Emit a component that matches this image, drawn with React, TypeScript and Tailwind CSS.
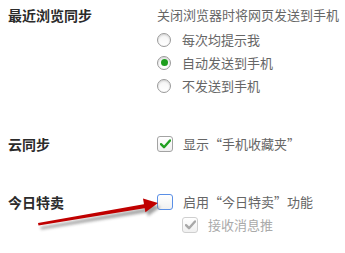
import React from "react";

const font = { fontFamily: '"Noto Sans CJK SC", "Noto Sans", sans-serif' };

function Radio({ checked }: { checked?: boolean }) {
  return (
    <span className="flex h-[14px] w-[14px] items-center justify-center rounded-full border border-[#9a9a9a] bg-gradient-to-b from-[#f4f4f4] to-white shadow-[inset_0_1px_2px_rgba(0,0,0,0.15)]">
      {checked && <span className="h-[7px] w-[7px] rounded-full bg-[#1e9e1e]" />}
    </span>
  );
}

function Check({ color }: { color: string }) {
  return (
    <svg width="11" height="10" viewBox="0 0 11 10">
      <path d="M1 5.2 L4 8.2 L10 1.5" fill="none" stroke={color} strokeWidth="2.4" strokeLinecap="round" strokeLinejoin="round" />
    </svg>
  );
}

function Box({ checked, blue, disabled }: { checked?: boolean; blue?: boolean; disabled?: boolean }) {
  return (
    <span
      className={
        "flex h-[16px] w-[16px] items-center justify-center rounded-[3px] border bg-gradient-to-b from-white to-[#f0f0f0] " +
        (blue ? "border-[#5a8fe6]" : disabled ? "border-[#cfcfcf]" : "border-[#a3a3a3]")
      }
    >
      {checked && <Check color={disabled ? "#a8a8a8" : "#21a021"} />}
    </span>
  );
}

export default function App() {
  return (
    <div className="relative h-[253px] w-[345px] overflow-hidden bg-white pt-[4px]" style={font}>
      {/* Row 1 */}
      <div className="flex">
        <div className="w-[157px] shrink-0 pl-2 text-[14px] font-bold leading-[22px] text-[#2b2b2b]">最近浏览同步</div>
        <div className="flex flex-col text-[13px] text-[#666]">
          <div className="leading-[22px] whitespace-nowrap">关闭浏览器时将网页发送到手机</div>
          <div className="mt-[2px] flex h-[23px] items-center gap-[11px]">
            <Radio />
            <span>每次均提示我</span>
          </div>
          <div className="flex h-[23px] items-center gap-[11px]">
            <Radio checked />
            <span>自动发送到手机</span>
          </div>
          <div className="flex h-[23px] items-center gap-[11px]">
            <Radio />
            <span>不发送到手机</span>
          </div>
        </div>
      </div>

      {/* Row 2 */}
      <div className="mt-[36px] flex">
        <div className="w-[157px] shrink-0 pl-2 text-[14px] font-bold leading-[22px] text-[#2b2b2b]">云同步</div>
        <div className="flex h-[22px] items-center gap-[10px] text-[13px] text-[#666]">
          <Box checked />
          <span>显示“手机收藏夹”</span>
        </div>
      </div>

      {/* Row 3 */}
      <div className="mt-[36px] flex">
        <div className="w-[157px] shrink-0 pl-2 text-[14px] font-bold leading-[22px] text-[#2b2b2b]">今日特卖</div>
        <div className="flex flex-col text-[13px]">
          <div className="flex h-[22px] items-center gap-[10px] text-[#666]">
            <Box blue />
            <span>启用“今日特卖”功能</span>
          </div>
          <div className="ml-[25px] flex h-[23px] items-center gap-[10px] text-[#aaa]">
            <Box checked disabled />
            <span className="whitespace-nowrap">接收消息推</span>
          </div>
        </div>
      </div>

      {/* Annotation arrow */}
      <svg className="pointer-events-none absolute left-0 top-0" width="345" height="253" viewBox="0 0 345 253">
        <defs>
          <filter id="sh" x="-20%" y="-50%" width="140%" height="200%">
            <feGaussianBlur stdDeviation="1.6" />
          </filter>
        </defs>
        <g transform="translate(2.5 4)" fill="#7a7a7a" opacity="0.7" filter="url(#sh)">
          <polygon points="38,223 38.5,225.5 146,208 145,204" />
          <polygon points="158,203 143,198.5 145.4,212.3" />
        </g>
        <g fill="#c00000">
          <polygon points="38,223 38.5,225.5 146,208 145,204" />
          <polygon points="158,203 143,198.5 145.4,212.3" />
        </g>
      </svg>
    </div>
  );
}
